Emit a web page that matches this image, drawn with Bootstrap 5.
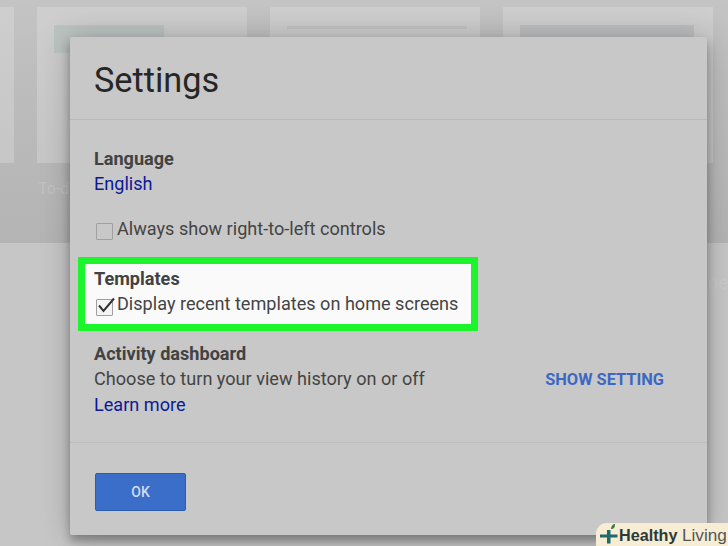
<!DOCTYPE html>
<html lang="en">
<head>
    <meta charset="UTF-8">
    <meta name="viewport" content="width=device-width, initial-scale=1.0">
    <title>Settings</title>
    <link href="https://cdn.jsdelivr.net/npm/bootstrap@5.3.2/dist/css/bootstrap.min.css" rel="stylesheet">
    <style>
        html, body {
            height: 546px;
            overflow: hidden;
        }
        body {
            background-color: #c6c6c6;
            font-family: Roboto, "Liberation Sans", sans-serif;
            font-size: 18.1px;
            line-height: 25.3px;
            color: #444;
            position: relative;
        }
        /* dimmed home page behind the dialog */
        .home-top {
            height: 243px;
            padding-top: 7px;
            background-color: #b6b6b6;
            background-image: linear-gradient(#c4c4c4 0, #bcbcbc 90px, #b4b4b4 243px);
            overflow: hidden;
        }
        .thumb-row {
            gap: 23px;
            margin-left: -196px;
        }
        .thumb {
            width: 210px;
            height: 156px;
            flex: none;
            background-image: linear-gradient(#cecece, #c6c6c6);
            padding: 18px 17px;
        }
        .thumb-green {
            width: 110px;
            height: 28px;
            background-color: #bcc4c2;
        }
        .thumb-line {
            height: 3px;
            margin-top: 1px;
            width: 180px;
            background-color: #c2c2c2;
        }
        .thumb-grey {
            width: 174px;
            height: 50px;
            background-color: #bcbec0;
        }
        .home-caption {
            margin: 13px 0 0 38px;
            color: #c2c2c2;
            font-size: 16px;
        }
        .home-rest {
            padding: 27px 0 0;
            text-align: right;
            color: #cbcbcb;
        }
        .settings-dialog {
            position: absolute;
            left: 70px;
            top: 37px;
            width: 637px;
            height: 498px;
            background-color: #c8c8c8;
            border: 0;
            border-radius: 2px;
            box-shadow: 0 0 30px rgba(0, 0, 0, .22), 0 6px 10px rgba(0, 0, 0, .3);
        }
        .dialog-head {
            height: 83px;
            padding: 24px 24px 0;
            border-bottom: 1px solid #bababa;
            font-size: 34.3px;
            line-height: 38px;
            color: #262626;
        }
        .dialog-body {
            height: 323px;
            padding: 26px 24px 0;
            border-bottom: 1px solid #bcbcbc;
        }
        .label-strong {
            font-weight: 700;
            color: #424242;
        }
        .plain-link {
            color: #0a1a96;
            text-decoration: none;
        }
        .tick-row {
            display: flex;
            align-items: center;
            position: relative;
        }
        .tick-box {
            display: block;
            width: 17px;
            height: 17px;
            margin: 7px 4px 0 2px;
            flex: none;
            border: 1px solid #a0a0a0;
            border-radius: 1px;
            background-color: #c8c8c8;
        }
        .tick-mark {
            position: absolute;
            left: 3px;
            top: 5px;
        }
        .rtl-row {
            margin-top: 19px;
        }
        .highlight-box {
            width: 400px;
            height: 74px;
            margin: 16px 0 0 -16px;
            padding: 2px 9px 0;
            background-color: #fafafa;
            border: 7px solid #1cf52c;
        }
        .highlight-box .tick-box {
            background-color: #f4f4f4;
        }
        .activity-block {
            margin-top: 10px;
            line-height: 25.6px;
        }
        .show-setting {
            color: #3c68c4;
            font-size: 16.4px;
            font-weight: 700;
            text-decoration: none;
            margin: 0 19px 0 0;
            padding-top: 1px;
        }
        .dialog-foot {
            padding: 30px 25px 0;
        }
        .ok-btn {
            display: block;
            width: 91px;
            height: 38px;
            padding: 0;
            font-size: 14px;
            font-weight: 500;
            color: #d2dcf0;
            background-color: #3a6ec8;
            border: 1px solid #2a5cb4;
            border-radius: 2px;
        }
        .brand-tag {
            position: absolute;
            right: 0;
            bottom: 0;
            height: 23px;
            width: 132px;
            padding-left: 3px;
            background-color: #f7edd5;
            border-top-left-radius: 11px;
            font-family: "Liberation Sans", sans-serif;
            font-size: 16.2px;
            line-height: 24px;
            white-space: nowrap;
            color: #3a3a3a;
        }
        .brand-tag b {
            color: #2b3a38;
        }
        .brand-tag span {
            color: #555;
            font-size: 17.2px;
        }
    </style>
</head>
<body>
    <div class="home-top">
        <div class="d-flex thumb-row">
            <div class="thumb"></div>
            <div class="thumb"><div class="thumb-green"></div></div>
            <div class="thumb"><div class="thumb-line"></div></div>
            <div class="thumb"><div class="thumb-grey"></div></div>
        </div>
        <div class="home-caption">To-do</div>
    </div>
    <div class="home-rest">me</div>

    <div class="card settings-dialog">
        <div class="dialog-head">Settings</div>
        <div class="dialog-body">
            <div class="label-strong">Language</div>
            <a class="plain-link d-block" href="#">English</a>

            <div class="tick-row rtl-row">
                <span class="tick-box"></span>
                <span>Always show right-to-left controls</span>
            </div>

            <div class="highlight-box">
                <div class="label-strong">Templates</div>
                <div class="tick-row">
                    <span class="tick-box"></span>
                    <svg class="tick-mark" width="20" height="18" viewBox="0 0 20 18"><path d="M2 9.500l4.500 5.500L17 2.500" fill="none" stroke="#333" stroke-width="2"/></svg>
                    <span>Display recent templates on home screens</span>
                </div>
            </div>

            <div class="d-flex justify-content-between align-items-center activity-block">
                <div>
                    <div class="label-strong">Activity dashboard</div>
                    <div>Choose to turn your view history on or off</div>
                    <a class="plain-link d-block" href="#">Learn more</a>
                </div>
                <a class="show-setting" href="#">SHOW SETTING</a>
            </div>
        </div>
        <div class="dialog-foot">
            <button class="btn ok-btn" type="button">OK</button>
        </div>
    </div>

    <div class="brand-tag">
        <svg width="20" height="22" viewBox="0 0 20 22" class="align-top"><path d="M8 7h3.500v4.500h7v3h-7v6h-3.500v-6h-7v-3h7z" fill="#1f6a6a"/><path d="M12 6c0-3 2-5 4-5 0 3-1 5-4 5z" fill="#3d7a3a"/></svg><b>Healthy</b> <span>Living</span>
    </div>

    <script src="https://cdn.jsdelivr.net/npm/bootstrap@5.3.2/dist/js/bootstrap.bundle.min.js"></script>
</body>
</html>
